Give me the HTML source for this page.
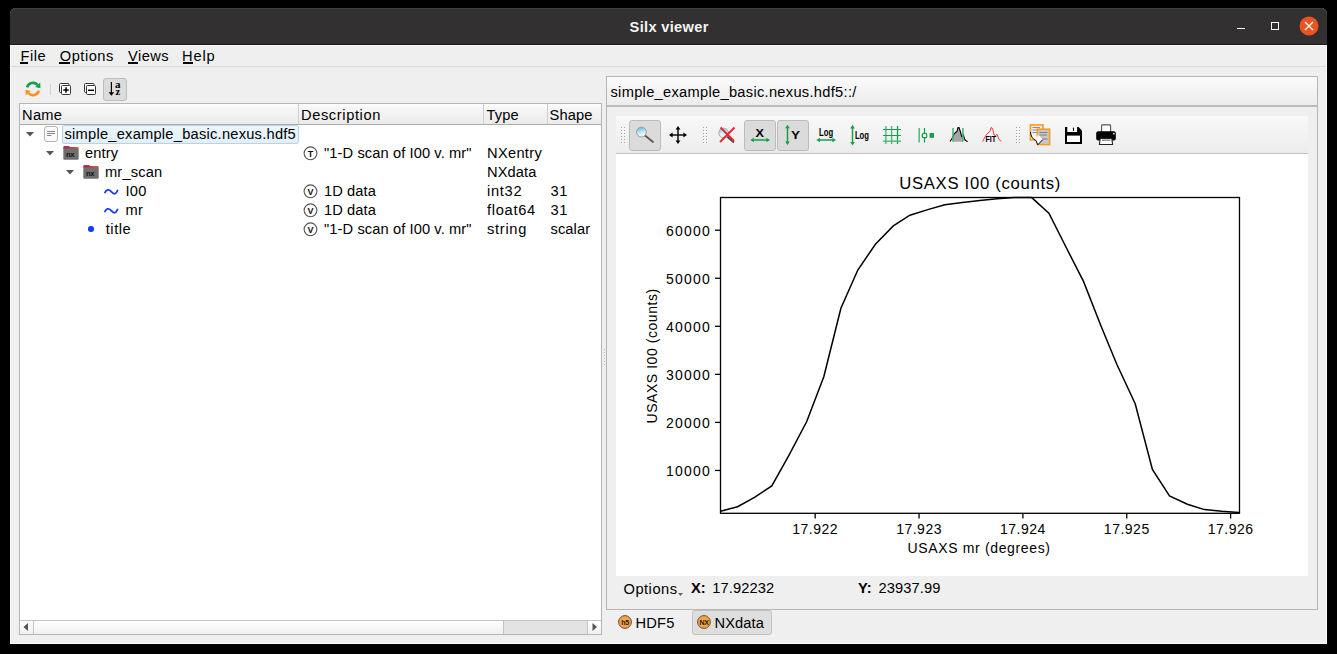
<!DOCTYPE html>
<html><head><meta charset="utf-8"><style>
html,body{margin:0;padding:0;}
body{width:1337px;height:654px;background:#000;position:relative;overflow:hidden;font-family:"Liberation Sans", sans-serif;}
.t{position:absolute;white-space:pre;line-height:1;}
svg{overflow:visible;}
</style></head><body>
<div style="position:absolute;left:10px;top:8px;width:1317px;height:636px;background:#efefef;border-radius:6px 6px 0 0;"></div>
<div style="position:absolute;left:10px;top:8px;width:1317px;height:37px;background:#323030;border-radius:6px 6px 0 0;box-shadow:inset 0 1px 0 #3e3c3c;"></div>
<div style="position:absolute;left:10px;top:44px;width:1317px;height:1px;background:#1c1c1c;"></div>
<div class="t" style="left:629.60px;top:20.00px;font-size:14.67px;font-weight:700;color:#f4f4f4;letter-spacing:0.3px;">Silx viewer</div>
<div style="position:absolute;left:1237px;top:28px;width:8px;height:1px;background:#fff;"></div>
<div style="position:absolute;left:1271px;top:22px;width:8px;height:8px;border:1px solid #fff;box-sizing:border-box;"></div>
<svg style="position:absolute;left:1299px;top:16px;" width="20" height="20" viewBox="0 0 20 20"><circle cx="10" cy="10" r="9.5" fill="#e95420"/><path d="M6 6 L14 14 M14 6 L6 14" stroke="#fff" stroke-width="1.3"/></svg>
<div style="position:absolute;left:10px;top:45px;width:1317px;height:1px;background:#fbfbfb;"></div>
<div style="position:absolute;left:10px;top:45px;width:1px;height:599px;background:#fbfbfb;"></div>
<div style="position:absolute;left:1326px;top:45px;width:1px;height:599px;background:#fbfbfb;"></div>
<div style="position:absolute;left:10px;top:643px;width:1317px;height:1px;background:#fbfbfb;"></div>
<div class="t" style="left:20.50px;top:49.00px;font-size:14.67px;font-weight:400;color:#000;letter-spacing:0.5px;">File</div>
<div style="position:absolute;left:20px;top:62px;width:8px;height:2px;background:#000;"></div>
<div class="t" style="left:59.80px;top:49.00px;font-size:14.67px;font-weight:400;color:#000;letter-spacing:0.5px;">Options</div>
<div style="position:absolute;left:59.3px;top:62px;width:10.7px;height:2px;background:#000;"></div>
<div class="t" style="left:128.10px;top:49.00px;font-size:14.67px;font-weight:400;color:#000;letter-spacing:0.4px;">Views</div>
<div style="position:absolute;left:127.8px;top:62px;width:10px;height:2px;background:#000;"></div>
<div class="t" style="left:182.10px;top:49.00px;font-size:14.67px;font-weight:400;color:#000;letter-spacing:0.8px;">Help</div>
<div style="position:absolute;left:182.7px;top:62px;width:10.1px;height:2px;background:#000;"></div>
<div style="position:absolute;left:11px;top:66px;width:1315px;height:1px;background:#d9d9d9;"></div>
<svg style="position:absolute;left:22px;top:78px;" width="22" height="22" viewBox="0 0 22 22"><path d="M5.11 9.42 A6.1 6.1 0 0 1 15.53 6.92" fill="none" stroke="#14a04a" stroke-width="2.6"/><path d="M18.48 10.19 L18.21 4.51 L13.16 9.06 Z" fill="#14a04a"/><path d="M16.89 12.58 A6.1 6.1 0 0 1 6.47 15.08" fill="none" stroke="#f7931e" stroke-width="2.6"/><path d="M3.52 11.81 L3.79 17.49 L8.84 12.94 Z" fill="#f7931e"/></svg>
<div style="position:absolute;left:50px;top:84px;width:1px;height:11px;background:#d0d0d0;"></div>
<svg style="position:absolute;left:59px;top:83px;" width="13" height="13" viewBox="0 0 13 13"><rect x="0.5" y="0.5" width="9.5" height="9" fill="#fff" stroke="#333" stroke-width="1" rx="1"/><rect x="2.5" y="2.5" width="9" height="9" fill="#fff" stroke="#333" stroke-width="1" rx="1"/><path d="M4.3 7 H9.7 M7 4.3 V9.7" stroke="#000" stroke-width="1.5"/></svg>
<svg style="position:absolute;left:84px;top:83px;" width="13" height="13" viewBox="0 0 13 13"><rect x="0.5" y="0.5" width="9.5" height="9" fill="#fff" stroke="#333" stroke-width="1" rx="1"/><rect x="2.5" y="2.5" width="9" height="9" fill="#fff" stroke="#333" stroke-width="1" rx="1"/><path d="M4 7.3 H10" stroke="#000" stroke-width="1.5"/></svg>
<div style="position:absolute;left:103px;top:78px;width:24px;height:23px;background:#dcdcdc;border:1px solid #bdbdbd;border-radius:3px;box-sizing:border-box;"></div>
<svg style="position:absolute;left:106px;top:81px;" width="18" height="18" viewBox="0 0 18 18"><path d="M5.4 1 V12" stroke="#000" stroke-width="1.2"/><path d="M2.6 11.2 L5.4 14.8 L8.2 11.2 Z" fill="#000"/><text x="8.9" y="6.9" font-family="Liberation Serif" font-size="11" font-weight="700" fill="#000">a</text><text x="9.6" y="13.9" font-family="Liberation Serif" font-size="10.5" font-weight="700" fill="#000">z</text></svg>
<div style="position:absolute;left:19px;top:103px;width:583px;height:532px;background:#fff;border:1px solid #b5b5b5;box-sizing:border-box;"></div>
<div style="position:absolute;left:20px;top:104px;width:581px;height:21px;background:linear-gradient(#ffffff,#f6f6f6 20%,#ebebeb);border-bottom:1px solid #ababab;box-sizing:border-box;"></div>
<div style="position:absolute;left:298px;top:104px;width:1px;height:20px;background:#cfcfcf;"></div>
<div style="position:absolute;left:483px;top:104px;width:1px;height:20px;background:#cfcfcf;"></div>
<div style="position:absolute;left:547px;top:104px;width:1px;height:20px;background:#cfcfcf;"></div>
<div class="t" style="left:22.00px;top:108.00px;font-size:14.67px;font-weight:400;color:#000;letter-spacing:0.3px;">Name</div>
<div class="t" style="left:301.00px;top:108.00px;font-size:14.67px;font-weight:400;color:#000;letter-spacing:0.6px;">Description</div>
<div class="t" style="left:486.50px;top:108.00px;font-size:14.67px;font-weight:400;color:#000;letter-spacing:0.1px;">Type</div>
<div class="t" style="left:549.50px;top:108.00px;font-size:14.67px;font-weight:400;color:#000;letter-spacing:0.1px;">Shape</div>
<svg style="position:absolute;left:26px;top:132px;" width="8" height="5" viewBox="0 0 8 5"><path d="M0 0 H8 L4 4.5 Z" fill="#555"/></svg>
<svg style="position:absolute;left:44px;top:126px;" width="14" height="16" viewBox="0 0 14 16"><rect x="0.5" y="0.5" width="13" height="15" rx="2.5" fill="#fafafa" stroke="#b4b4b4"/><path d="M3 5.5 H11 M3 7.5 H11 M3 9.5 H7.5" stroke="#888" stroke-width="1"/></svg>
<div style="position:absolute;left:62px;top:125px;width:237px;height:19px;background:linear-gradient(#ebf6fd,#e3eff8);border:1px solid #b9d2e6;border-radius:2px;box-sizing:border-box;"></div>
<div class="t" style="left:64.50px;top:127.00px;font-size:14.67px;font-weight:400;color:#000;letter-spacing:0.24px;">simple_example_basic.nexus.hdf5</div>
<svg style="position:absolute;left:46px;top:151px;" width="8" height="5" viewBox="0 0 8 5"><path d="M0 0 H8 L4 4.5 Z" fill="#555"/></svg>
<svg style="position:absolute;left:63px;top:146px;" width="16" height="14" viewBox="0 0 16 14"><defs><linearGradient id="fo" x1="0" x2="1"><stop offset="0" stop-color="#9b2f55"/><stop offset="0.45" stop-color="#b83a48"/><stop offset="1" stop-color="#ea5f28"/></linearGradient></defs><path d="M0.3 3 V1.3 Q0.3 0 1.6 0 H6 L7.2 1 H14.6 Q15.7 1 15.7 2.2 V3 Z" fill="url(#fo)"/><rect x="0.3" y="2.4" width="15.4" height="11.4" rx="1.3" fill="#6f6f6f"/><text x="2.9" y="10.7" font-family="Liberation Sans" font-size="7.6" font-weight="700" fill="#111" letter-spacing="-0.3">nx</text></svg>
<div class="t" style="left:85.00px;top:146.00px;font-size:14.67px;font-weight:400;color:#000;letter-spacing:0.15px;">entry</div>
<svg style="position:absolute;left:66px;top:170px;" width="8" height="5" viewBox="0 0 8 5"><path d="M0 0 H8 L4 4.5 Z" fill="#555"/></svg>
<svg style="position:absolute;left:83px;top:165px;" width="16" height="14" viewBox="0 0 16 14"><defs><linearGradient id="fo" x1="0" x2="1"><stop offset="0" stop-color="#9b2f55"/><stop offset="0.45" stop-color="#b83a48"/><stop offset="1" stop-color="#ea5f28"/></linearGradient></defs><path d="M0.3 3 V1.3 Q0.3 0 1.6 0 H6 L7.2 1 H14.6 Q15.7 1 15.7 2.2 V3 Z" fill="url(#fo)"/><rect x="0.3" y="2.4" width="15.4" height="11.4" rx="1.3" fill="#6f6f6f"/><text x="2.9" y="10.7" font-family="Liberation Sans" font-size="7.6" font-weight="700" fill="#111" letter-spacing="-0.3">nx</text></svg>
<div class="t" style="left:105.00px;top:165.00px;font-size:14.67px;font-weight:400;color:#000;letter-spacing:0.15px;">mr_scan</div>
<svg style="position:absolute;left:104px;top:188px;" width="15" height="8" viewBox="0 0 15 8"><path d="M0.6 5.2 C2 1.6, 4.6 0.6, 7 3.4 S11.6 7.6, 13.8 1.8" fill="none" stroke="#1a3cff" stroke-width="1.75"/></svg>
<div class="t" style="left:125.50px;top:184.00px;font-size:14.67px;font-weight:400;color:#000;letter-spacing:0.3px;">I00</div>
<svg style="position:absolute;left:104px;top:207px;" width="15" height="8" viewBox="0 0 15 8"><path d="M0.6 5.2 C2 1.6, 4.6 0.6, 7 3.4 S11.6 7.6, 13.8 1.8" fill="none" stroke="#1a3cff" stroke-width="1.75"/></svg>
<div class="t" style="left:125.50px;top:203.00px;font-size:14.67px;font-weight:400;color:#000;letter-spacing:0.3px;">mr</div>
<div style="position:absolute;left:88.3px;top:226.2px;width:5.4px;height:5.4px;background:#1a3cff;border-radius:50%;"></div>
<div class="t" style="left:105.80px;top:222.00px;font-size:14.67px;font-weight:400;color:#000;letter-spacing:0.5px;">title</div>
<svg style="position:absolute;left:302.5px;top:145.5px;" width="15" height="15" viewBox="0 0 15 15"><circle cx="7.5" cy="7.3" r="6.4" fill="#fff" stroke="#555" stroke-width="1.1"/><text x="7.5" y="10.6" text-anchor="middle" font-family="Liberation Sans" font-size="9" font-weight="700" fill="#111">T</text></svg>
<div class="t" style="left:324.00px;top:146.00px;font-size:14.67px;font-weight:400;color:#000;letter-spacing:0.1px;">"1-D scan of I00 v. mr"</div>
<svg style="position:absolute;left:302.5px;top:183.5px;" width="15" height="15" viewBox="0 0 15 15"><circle cx="7.5" cy="7.3" r="6.4" fill="#fff" stroke="#555" stroke-width="1.1"/><text x="7.5" y="10.6" text-anchor="middle" font-family="Liberation Sans" font-size="9" font-weight="700" fill="#111">V</text></svg>
<svg style="position:absolute;left:302.5px;top:202.5px;" width="15" height="15" viewBox="0 0 15 15"><circle cx="7.5" cy="7.3" r="6.4" fill="#fff" stroke="#555" stroke-width="1.1"/><text x="7.5" y="10.6" text-anchor="middle" font-family="Liberation Sans" font-size="9" font-weight="700" fill="#111">V</text></svg>
<svg style="position:absolute;left:302.5px;top:221.5px;" width="15" height="15" viewBox="0 0 15 15"><circle cx="7.5" cy="7.3" r="6.4" fill="#fff" stroke="#555" stroke-width="1.1"/><text x="7.5" y="10.6" text-anchor="middle" font-family="Liberation Sans" font-size="9" font-weight="700" fill="#111">V</text></svg>
<div class="t" style="left:324.00px;top:184.00px;font-size:14.67px;font-weight:400;color:#000;letter-spacing:0.1px;">1D data</div>
<div class="t" style="left:324.00px;top:203.00px;font-size:14.67px;font-weight:400;color:#000;letter-spacing:0.1px;">1D data</div>
<div class="t" style="left:324.00px;top:222.00px;font-size:14.67px;font-weight:400;color:#000;letter-spacing:0.1px;">"1-D scan of I00 v. mr"</div>
<div class="t" style="left:487.00px;top:146.00px;font-size:14.67px;font-weight:400;color:#000;letter-spacing:0.3px;">NXentry</div>
<div class="t" style="left:487.00px;top:165.00px;font-size:14.67px;font-weight:400;color:#000;letter-spacing:0.1px;">NXdata</div>
<div class="t" style="left:487.00px;top:184.00px;font-size:14.67px;font-weight:400;color:#000;letter-spacing:0.7px;">int32</div>
<div class="t" style="left:487.00px;top:203.00px;font-size:14.67px;font-weight:400;color:#000;letter-spacing:0.7px;">float64</div>
<div class="t" style="left:487.00px;top:222.00px;font-size:14.67px;font-weight:400;color:#000;letter-spacing:0.7px;">string</div>
<div class="t" style="left:550.50px;top:184.00px;font-size:14.67px;font-weight:400;color:#000;letter-spacing:0.6px;">31</div>
<div class="t" style="left:550.50px;top:203.00px;font-size:14.67px;font-weight:400;color:#000;letter-spacing:0.6px;">31</div>
<div class="t" style="left:550.50px;top:222.00px;font-size:14.67px;font-weight:400;color:#000;letter-spacing:0.1px;">scalar</div>
<div style="position:absolute;left:20px;top:620px;width:581px;height:14px;background:linear-gradient(#ffffff,#f0f0f0);border-top:1px solid #c4c4c4;box-sizing:border-box;"></div>
<div style="position:absolute;left:33px;top:620px;width:1px;height:14px;background:#c4c4c4;"></div>
<div style="position:absolute;left:503px;top:620px;width:85px;height:14px;background:#e3e3e3;border:1px solid #c4c4c4;border-bottom:none;box-sizing:border-box;"></div>
<svg style="position:absolute;left:23px;top:623px;" width="6" height="8" viewBox="0 0 6 8"><path d="M5 0 V8 L0.5 4 Z" fill="#555"/></svg>
<svg style="position:absolute;left:592px;top:623px;" width="6" height="8" viewBox="0 0 6 8"><path d="M0.5 0 V8 L5 4 Z" fill="#555"/></svg>
<div style="position:absolute;left:604px;top:349px;width:1px;height:1px;background:#b4b4b4;"></div>
<div style="position:absolute;left:604px;top:352px;width:1px;height:1px;background:#b4b4b4;"></div>
<div style="position:absolute;left:604px;top:355px;width:1px;height:1px;background:#b4b4b4;"></div>
<div style="position:absolute;left:604px;top:358px;width:1px;height:1px;background:#b4b4b4;"></div>
<div style="position:absolute;left:604px;top:361px;width:1px;height:1px;background:#b4b4b4;"></div>
<div style="position:absolute;left:604px;top:364px;width:1px;height:1px;background:#b4b4b4;"></div>
<div style="position:absolute;left:606px;top:76px;width:712px;height:534px;border:1px solid #b5b5b5;box-sizing:border-box;background:#efefef;"></div>
<div style="position:absolute;left:607px;top:77px;width:710px;height:28px;background:linear-gradient(#fbfbfb,#ececec);"></div>
<div style="position:absolute;left:607px;top:105px;width:710px;height:2px;background:#bcbcbc;"></div>
<div class="t" style="left:610.50px;top:85.00px;font-size:14.67px;font-weight:400;color:#000;letter-spacing:0.29px;">simple_example_basic.nexus.hdf5::/</div>
<div style="position:absolute;left:616px;top:116px;width:692px;height:38px;background:linear-gradient(#f8f8f8,#ececec);border-bottom:1px solid #c2c2c2;box-sizing:border-box;"></div>
<svg style="position:absolute;left:621px;top:127px;" width="5" height="17" viewBox="0 0 5 17"><rect x="1" y="1" width="1" height="1" fill="#fff"/><rect x="0" y="0" width="1" height="1" fill="#a2a2a2"/><rect x="1" y="4" width="1" height="1" fill="#fff"/><rect x="0" y="3" width="1" height="1" fill="#a2a2a2"/><rect x="1" y="7" width="1" height="1" fill="#fff"/><rect x="0" y="6" width="1" height="1" fill="#a2a2a2"/><rect x="1" y="10" width="1" height="1" fill="#fff"/><rect x="0" y="9" width="1" height="1" fill="#a2a2a2"/><rect x="1" y="13" width="1" height="1" fill="#fff"/><rect x="0" y="12" width="1" height="1" fill="#a2a2a2"/><rect x="1" y="16" width="1" height="1" fill="#fff"/><rect x="0" y="15" width="1" height="1" fill="#a2a2a2"/><rect x="4" y="1" width="1" height="1" fill="#fff"/><rect x="3" y="0" width="1" height="1" fill="#a2a2a2"/><rect x="4" y="4" width="1" height="1" fill="#fff"/><rect x="3" y="3" width="1" height="1" fill="#a2a2a2"/><rect x="4" y="7" width="1" height="1" fill="#fff"/><rect x="3" y="6" width="1" height="1" fill="#a2a2a2"/><rect x="4" y="10" width="1" height="1" fill="#fff"/><rect x="3" y="9" width="1" height="1" fill="#a2a2a2"/><rect x="4" y="13" width="1" height="1" fill="#fff"/><rect x="3" y="12" width="1" height="1" fill="#a2a2a2"/><rect x="4" y="16" width="1" height="1" fill="#fff"/><rect x="3" y="15" width="1" height="1" fill="#a2a2a2"/></svg>
<svg style="position:absolute;left:703px;top:127px;" width="5" height="17" viewBox="0 0 5 17"><rect x="1" y="1" width="1" height="1" fill="#fff"/><rect x="0" y="0" width="1" height="1" fill="#a2a2a2"/><rect x="1" y="4" width="1" height="1" fill="#fff"/><rect x="0" y="3" width="1" height="1" fill="#a2a2a2"/><rect x="1" y="7" width="1" height="1" fill="#fff"/><rect x="0" y="6" width="1" height="1" fill="#a2a2a2"/><rect x="1" y="10" width="1" height="1" fill="#fff"/><rect x="0" y="9" width="1" height="1" fill="#a2a2a2"/><rect x="1" y="13" width="1" height="1" fill="#fff"/><rect x="0" y="12" width="1" height="1" fill="#a2a2a2"/><rect x="1" y="16" width="1" height="1" fill="#fff"/><rect x="0" y="15" width="1" height="1" fill="#a2a2a2"/><rect x="4" y="1" width="1" height="1" fill="#fff"/><rect x="3" y="0" width="1" height="1" fill="#a2a2a2"/><rect x="4" y="4" width="1" height="1" fill="#fff"/><rect x="3" y="3" width="1" height="1" fill="#a2a2a2"/><rect x="4" y="7" width="1" height="1" fill="#fff"/><rect x="3" y="6" width="1" height="1" fill="#a2a2a2"/><rect x="4" y="10" width="1" height="1" fill="#fff"/><rect x="3" y="9" width="1" height="1" fill="#a2a2a2"/><rect x="4" y="13" width="1" height="1" fill="#fff"/><rect x="3" y="12" width="1" height="1" fill="#a2a2a2"/><rect x="4" y="16" width="1" height="1" fill="#fff"/><rect x="3" y="15" width="1" height="1" fill="#a2a2a2"/></svg>
<svg style="position:absolute;left:1016px;top:127px;" width="5" height="17" viewBox="0 0 5 17"><rect x="1" y="1" width="1" height="1" fill="#fff"/><rect x="0" y="0" width="1" height="1" fill="#a2a2a2"/><rect x="1" y="4" width="1" height="1" fill="#fff"/><rect x="0" y="3" width="1" height="1" fill="#a2a2a2"/><rect x="1" y="7" width="1" height="1" fill="#fff"/><rect x="0" y="6" width="1" height="1" fill="#a2a2a2"/><rect x="1" y="10" width="1" height="1" fill="#fff"/><rect x="0" y="9" width="1" height="1" fill="#a2a2a2"/><rect x="1" y="13" width="1" height="1" fill="#fff"/><rect x="0" y="12" width="1" height="1" fill="#a2a2a2"/><rect x="1" y="16" width="1" height="1" fill="#fff"/><rect x="0" y="15" width="1" height="1" fill="#a2a2a2"/><rect x="4" y="1" width="1" height="1" fill="#fff"/><rect x="3" y="0" width="1" height="1" fill="#a2a2a2"/><rect x="4" y="4" width="1" height="1" fill="#fff"/><rect x="3" y="3" width="1" height="1" fill="#a2a2a2"/><rect x="4" y="7" width="1" height="1" fill="#fff"/><rect x="3" y="6" width="1" height="1" fill="#a2a2a2"/><rect x="4" y="10" width="1" height="1" fill="#fff"/><rect x="3" y="9" width="1" height="1" fill="#a2a2a2"/><rect x="4" y="13" width="1" height="1" fill="#fff"/><rect x="3" y="12" width="1" height="1" fill="#a2a2a2"/><rect x="4" y="16" width="1" height="1" fill="#fff"/><rect x="3" y="15" width="1" height="1" fill="#a2a2a2"/></svg>
<div style="position:absolute;left:629px;top:120px;width:32px;height:31px;background:#dbdbdb;border:1px solid #bbbbbb;border-radius:3px;box-sizing:border-box;"></div>
<div style="position:absolute;left:744px;top:120px;width:32px;height:31px;background:#dbdbdb;border:1px solid #bbbbbb;border-radius:3px;box-sizing:border-box;"></div>
<div style="position:absolute;left:777px;top:120px;width:32px;height:31px;background:#dbdbdb;border:1px solid #bbbbbb;border-radius:3px;box-sizing:border-box;"></div>
<div style="position:absolute;left:616px;top:154px;width:692px;height:422px;background:#fff;"></div>
<svg style="position:absolute;left:616px;top:154px;" width="692" height="422" viewBox="0 0 692 422"><g font-family="Liberation Sans" fill="#000"><polyline points="104.6,357.2 121.6,352.7 138.5,343.4 155.8,331.9 172.9,301.4 190.6,267.8 207.8,222.7 224.9,154.2 241.8,116.0 259.4,90.3 277.3,71.9 293.9,61.2 311.8,55.6 328.8,50.7 346.5,48.5 363.8,46.5 381.1,44.8 398.4,43.6 415.7,43.6 432.9,59.1 450.2,93.5 467.5,127.4 484.8,171.5 500.8,210.3 519.2,249.8 536.4,315.5 553.5,341.9 571.4,350.2 588.5,355.6 605.8,357.2 623.0,358.4" fill="none" stroke="#000" stroke-width="1.5" stroke-linejoin="miter"/><rect x="104.5" y="43.5" width="519.0" height="315.79999999999995" fill="none" stroke="#000" stroke-width="1.3"/><path d="M99 316.45 H104.5" stroke="#000" stroke-width="1.3"/><text x="94.89999999999998" y="322.35" text-anchor="end" font-size="14" letter-spacing="1.2">10000</text><path d="M99 268.40 H104.5" stroke="#000" stroke-width="1.3"/><text x="94.89999999999998" y="274.30" text-anchor="end" font-size="14" letter-spacing="1.2">20000</text><path d="M99 220.35 H104.5" stroke="#000" stroke-width="1.3"/><text x="94.89999999999998" y="226.25" text-anchor="end" font-size="14" letter-spacing="1.2">30000</text><path d="M99 172.30 H104.5" stroke="#000" stroke-width="1.3"/><text x="94.89999999999998" y="178.20" text-anchor="end" font-size="14" letter-spacing="1.2">40000</text><path d="M99 124.25 H104.5" stroke="#000" stroke-width="1.3"/><text x="94.89999999999998" y="130.15" text-anchor="end" font-size="14" letter-spacing="1.2">50000</text><path d="M99 76.20 H104.5" stroke="#000" stroke-width="1.3"/><text x="94.89999999999998" y="82.10" text-anchor="end" font-size="14" letter-spacing="1.2">60000</text><path d="M199.20 359.29999999999995 V364.5" stroke="#000" stroke-width="1.3"/><text x="176.30" y="380.1" font-size="14" letter-spacing="0.5">17.922</text><path d="M303.05 359.29999999999995 V364.5" stroke="#000" stroke-width="1.3"/><text x="280.15" y="380.1" font-size="14" letter-spacing="0.5">17.923</text><path d="M406.90 359.29999999999995 V364.5" stroke="#000" stroke-width="1.3"/><text x="384.00" y="380.1" font-size="14" letter-spacing="0.5">17.924</text><path d="M510.75 359.29999999999995 V364.5" stroke="#000" stroke-width="1.3"/><text x="487.85" y="380.1" font-size="14" letter-spacing="0.5">17.925</text><path d="M614.60 359.29999999999995 V364.5" stroke="#000" stroke-width="1.3"/><text x="591.70" y="380.1" font-size="14" letter-spacing="0.5">17.926</text><text x="283.20000000000005" y="34.900000000000006" font-size="16.7" letter-spacing="0.7">USAXS I00 (counts)</text><text x="291.5" y="398.70000000000005" font-size="14" letter-spacing="0.65">USAXS mr (degrees)</text><text transform="translate(41.200000000000045,269.5) rotate(-90)" x="0" y="0" font-size="14" letter-spacing="0.55">USAXS I00 (counts)</text></g></svg>
<svg style="position:absolute;left:629px;top:120px;" width="32" height="31" viewBox="0 0 32 31"><defs><linearGradient id="mg" x1="0" y1="0" x2="0.3" y2="1"><stop offset="0" stop-color="#38b4e6"/><stop offset="0.55" stop-color="#bfe4f4"/><stop offset="1" stop-color="#f4fafd"/></linearGradient></defs><path d="M16 15.5 L24 22" stroke="#6b5555" stroke-width="1.9" stroke-linecap="round"/><circle cx="12.4" cy="12.1" r="4.9" fill="url(#mg)" stroke="#a49999" stroke-width="1"/></svg>
<svg style="position:absolute;left:668px;top:125px;" width="20" height="20" viewBox="0 0 20 20"><path d="M10 3.5 V16.5 M3.5 10 H16.5" stroke="#111" stroke-width="1.5"/><path d="M10 1 L12.4 4.6 H7.6 Z M10 19 L12.4 15.4 H7.6 Z M1 10 L4.6 7.6 V12.4 Z M19 10 L15.4 7.6 V12.4 Z" fill="#000"/></svg>
<svg style="position:absolute;left:718px;top:125px;" width="20" height="20" viewBox="0 0 20 20"><defs><linearGradient id="mg2" x1="0" y1="0" x2="0.3" y2="1"><stop offset="0" stop-color="#7cc8ea"/><stop offset="0.6" stop-color="#d4eef8"/><stop offset="1" stop-color="#f4fafd"/></linearGradient></defs><path d="M9 11.5 L16 17.5" stroke="#5b4646" stroke-width="2"/><circle cx="5.6" cy="8" r="4.8" fill="url(#mg2)" stroke="#a8a8a8" stroke-width="1"/><path d="M2 17 L16.5 2.5 M2.5 2.5 L16 16" stroke="#e8232b" stroke-width="1.8"/></svg>
<svg style="position:absolute;left:744px;top:120px;" width="32" height="31" viewBox="0 0 32 31"><text transform="translate(11.5,17.1) scale(1.22,1)" font-family="Liberation Sans" font-size="10.4" font-weight="700" fill="#000">X</text><path d="M9.3 20 H23" stroke="#13a04a" stroke-width="1.5"/><path d="M6.3 20 L9.9 17.7 V22.3 Z M26 20 L22.4 17.7 V22.3 Z" fill="#13a04a"/></svg>
<svg style="position:absolute;left:777px;top:120px;" width="32" height="31" viewBox="0 0 32 31"><text transform="translate(14,19.1) scale(1.18,1)" font-family="Liberation Sans" font-size="11.5" font-weight="700" fill="#000">Y</text><path d="M10.5 7.7 V22.1" stroke="#13a04a" stroke-width="1.5"/><path d="M10.5 4.7 L8.2 8.3 H12.8 Z M10.5 25.1 L8.2 21.5 H12.8 Z" fill="#13a04a"/></svg>
<svg style="position:absolute;left:814px;top:124px;" width="24" height="22" viewBox="0 0 24 22"><text transform="translate(5.1,12.1) scale(0.74,1)" font-family="Liberation Sans" font-size="10.4" font-weight="700" fill="#000">Log</text><path d="M5.3 16 H19" stroke="#13a04a" stroke-width="1.5"/><path d="M2.3 16 L5.9 13.7 V18.3 Z M22 16 L18.4 13.7 V18.3 Z" fill="#13a04a"/></svg>
<svg style="position:absolute;left:849px;top:124px;" width="22" height="22" viewBox="0 0 22 22"><text transform="translate(5.9,15.0) scale(0.74,1)" font-family="Liberation Sans" font-size="10.4" font-weight="700" fill="#000">Log</text><path d="M3.5 3.8 V18.6" stroke="#13a04a" stroke-width="1.5"/><path d="M3.5 0.8 L1.2000000000000002 4.4 H5.8 Z M3.5 21.6 L1.2000000000000002 18.0 H5.8 Z" fill="#13a04a"/></svg>
<svg style="position:absolute;left:883px;top:126px;" width="18" height="18" viewBox="0 0 18 18"><path d="M2.9 0 V18 M8.6 0 V18" stroke="#4cb97a" stroke-width="1.4"/><path d="M14.5 0 V18" stroke="#13a04a" stroke-width="1.3"/><path d="M0 3.5 H18 M0 9.5 H18" stroke="#13a04a" stroke-width="1.2"/><path d="M0 15.2 H18" stroke="#4cb97a" stroke-width="1.4"/></svg>
<svg style="position:absolute;left:917px;top:127px;" width="19" height="17" viewBox="0 0 19 17"><path d="M2.2 1 V15.5" stroke="#4cb97a" stroke-width="1.5"/><path d="M7.5 1 V15.5" stroke="#13a04a" stroke-width="1.2"/><rect x="5.4" y="6.4" width="4.2" height="4.2" rx="1.2" fill="#fff" stroke="#13a04a" stroke-width="1.3"/><rect x="12.6" y="6" width="4.4" height="4.8" fill="#13a04a"/></svg>
<svg style="position:absolute;left:945px;top:122px;" width="24" height="22" viewBox="0 0 24 22"><path d="M8 19.7 V13.5 L9 12 L10.5 10.5 L12 9.5 L13 5.5 L14 5.6 L15.5 10 L16.5 14 L17.5 15.5 L17.9 14.5 V19.7 Z" fill="#a5a5aa"/><path d="M5 19.5 L7 16.5 L9 12 L10.5 10.5 L12 9.5 L13 5.5 L14 5.6 L15.5 10 L16.5 14 L17.5 15.5 L18.5 13 L19 15.5 L20 18 L21 18.5 L22.5 19.8" fill="none" stroke="#000" stroke-width="1.1"/><path d="M8 6 V19.7 M17.9 6 V19.7" stroke="#4cb97a" stroke-width="1.6"/></svg>
<svg style="position:absolute;left:980px;top:122px;" width="24" height="22" viewBox="0 0 24 22"><path d="M2.7 19.5 L5 15 L6.5 12.3 L8 11 L10 9.3 L11 5.7 L12 5.8 L13 8 L14 13 L15.5 13.6 L17 12.3 L18 15 L19 17.5 L20.5 18.5 L21 19.5" fill="none" stroke="#f03a3a" stroke-width="1"/><text transform="translate(5.4,19.7) scale(0.82,1)" font-family="Liberation Sans" font-size="8.8" font-weight="700" fill="#000">FIT</text></svg>
<svg style="position:absolute;left:1029px;top:123px;" width="22" height="23" viewBox="0 0 22 23"><rect x="1.4" y="1.9" width="12.6" height="15" fill="#ececec" stroke="#f59a23" stroke-width="1.6"/><path d="M3.5 4.5 H11 M3.5 7 H11 M3.5 9.5 H9" stroke="#888" stroke-width="0.9"/><rect x="8.4" y="6.2" width="12.2" height="15.4" fill="#c8c8c8" stroke="#f59a23" stroke-width="1.6"/><path d="M10.5 9.5 H18.5 M10.5 12 H18 M13 16 H18.5" stroke="#777" stroke-width="0.9"/><path d="M1.4 9 Q2.2 15.6 6.8 17.4 L8.8 21.8 L13.8 16.6 L8.6 11.4 L8.4 13.8 Q4.6 13.2 1.4 9 Z" fill="#fff"/><path d="M1.4 9 Q2.2 15.6 6.8 17.4 L8.8 21.8 L13.8 16.6" fill="none" stroke="#000" stroke-width="1"/></svg>
<svg style="position:absolute;left:1064px;top:126px;" width="19" height="19" viewBox="0 0 19 19"><path d="M1 1 H14.5 L18 4.5 V18 H1 Z" fill="#000"/><rect x="3.3" y="1" width="9.8" height="5" fill="#fff"/><rect x="8.9" y="1.6" width="1.2" height="3.2" fill="#000"/><rect x="3" y="9.6" width="13" height="6.4" fill="#fff"/></svg>
<svg style="position:absolute;left:1095px;top:123px;" width="22" height="23" viewBox="0 0 22 23"><rect x="6.6" y="1.9" width="9" height="8" rx="0.8" fill="#fff" stroke="#555" stroke-width="1.1"/><rect x="1.2" y="8.2" width="19.6" height="9.2" rx="2" fill="#000"/><path d="M18.4 10.2 l1 0.3 l-0.6 0.9 Z" fill="#fff" stroke="#fff" stroke-width="0.8"/><path d="M4.4 21.5 L5.2 15.4 H16.8 L17.6 21.5 Z" fill="#fff" stroke="#222" stroke-width="1.1"/><rect x="7" y="16.4" width="8.4" height="1.6" fill="#999"/></svg>
<div class="t" style="left:623.50px;top:582.00px;font-size:14.67px;font-weight:400;color:#000;letter-spacing:0.5px;">Options</div>
<svg style="position:absolute;left:678px;top:593px;" width="5" height="3" viewBox="0 0 5 3"><path d="M0 0 H5 L2.5 3 Z" fill="#666"/></svg>
<div class="t" style="left:691.00px;top:581.00px;font-size:14.67px;font-weight:700;color:#000;letter-spacing:0.0px;">X:</div>
<div class="t" style="left:712.30px;top:581.00px;font-size:14.67px;font-weight:400;color:#000;letter-spacing:0.1px;">17.92232</div>
<div class="t" style="left:858.00px;top:581.00px;font-size:14.67px;font-weight:700;color:#000;letter-spacing:0.0px;">Y:</div>
<div class="t" style="left:878.50px;top:581.00px;font-size:14.67px;font-weight:400;color:#000;letter-spacing:0.1px;">23937.99</div>
<div style="position:absolute;left:692px;top:610px;width:80px;height:25px;background:#dedede;border:1px solid #c2c2c2;border-radius:3px;box-sizing:border-box;"></div>
<svg style="position:absolute;left:618px;top:615px;" width="14" height="14" viewBox="0 0 14 14"><circle cx="7" cy="7" r="6.4" fill="#f6a53c" stroke="#5e5040" stroke-width="1"/><text x="7" y="9.6" text-anchor="middle" font-family="Liberation Sans" font-size="7" font-weight="700" fill="#1a1a1a" letter-spacing="-0.3">h5</text></svg>
<div class="t" style="left:635.50px;top:616.00px;font-size:14.67px;font-weight:400;color:#000;letter-spacing:0.2px;">HDF5</div>
<svg style="position:absolute;left:697px;top:615px;" width="14" height="14" viewBox="0 0 14 14"><circle cx="7" cy="7" r="6.4" fill="#f6a53c" stroke="#5e5040" stroke-width="1"/><text x="7" y="9.6" text-anchor="middle" font-family="Liberation Sans" font-size="7" font-weight="700" fill="#1a1a1a" letter-spacing="-0.3">NX</text></svg>
<div class="t" style="left:714.50px;top:616.00px;font-size:14.67px;font-weight:400;color:#000;letter-spacing:0.1px;">NXdata</div>
</body></html>
